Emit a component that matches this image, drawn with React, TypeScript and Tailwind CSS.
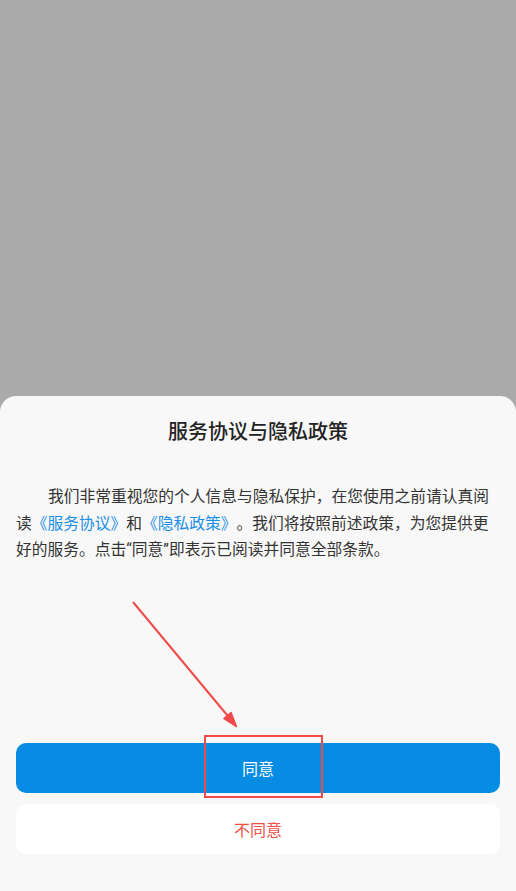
export default function App() {
  return (
    <div
      className="relative flex h-[891px] w-[516px] flex-col overflow-hidden bg-[#aaaaaa]"
      style={{ fontFamily: '"Noto Sans CJK SC", "Noto Sans", sans-serif' }}
    >
      <div className="flex-1" />
      <div className="flex h-[495px] flex-col rounded-t-[16px] bg-[#f8f8f8] px-4 pt-[21px] pb-[37px]">
        <h1 className="text-center text-[20px] leading-[28px] font-medium text-[#222222]">
          服务协议与隐私政策
        </h1>
        <p className="mt-[38px] indent-[32px] text-[15.75px] leading-[26.5px] text-[#333333] [text-spacing-trim:space-all]">
          我们非常重视您的个人信息与隐私保护，在您使用之前请认真阅读
          <span className="text-[#1a8fe8]">《服务协议》</span>和
          <span className="text-[#1a8fe8]">《隐私政策》</span>
          。我们将按照前述政策，为您提供更好的服务。点击
          <span className="font-['Roboto']">“</span>同意<span className="font-['Roboto']">”</span>
          即表示已阅读并同意全部条款。
        </p>
        <div className="flex-1" />
        <div className="flex flex-col gap-[11px]">
          <button className="h-[50px] w-full rounded-[10px] bg-[#078ce3] text-[16px] text-white">
            同意
          </button>
          <button className="h-[50px] w-full rounded-[10px] bg-white text-[16px] text-[#ef4f45]">
            不同意
          </button>
        </div>
      </div>

      {/* annotation overlay */}
      <svg
        className="pointer-events-none absolute inset-0"
        width="516"
        height="891"
        viewBox="0 0 516 891"
      >
        <line x1="133" y1="602" x2="232" y2="721" stroke="#f04a4a" strokeWidth="2" />
        <path d="M236.5 726.5 L224 718.5 L231 712.5 Z" fill="#f04a4a" stroke="#f04a4a" strokeWidth="1.5" strokeLinejoin="round" />
        <rect x="205" y="736" width="117" height="61" fill="none" stroke="#f04a4a" strokeWidth="2" />
      </svg>
    </div>
  );
}
